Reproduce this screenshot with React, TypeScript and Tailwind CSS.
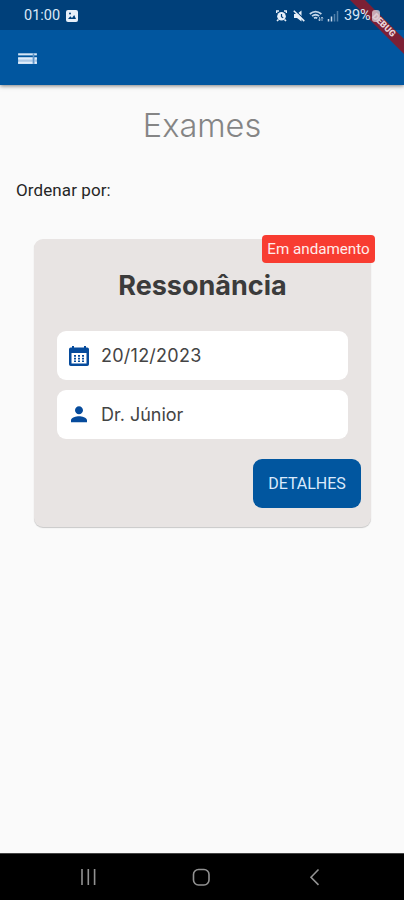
import React from 'react';

function StatusBar() {
  return (
    <div className="relative flex h-[30px] shrink-0 items-center bg-[#00407a] pl-6 text-[#dce8f6]">
      <span className="w-[38px] whitespace-nowrap pt-[3px] font-['Roboto'] text-[14.5px] leading-none">01:00</span>
      <svg className="ml-[4px] mt-px h-[12px] w-[12px]" viewBox="0 0 12 12">
        <rect width="12" height="12" rx="2" fill="#e7eff9" />
        <path d="M2 9 4.3 6.2 6 8 8.2 5 10 9Z" fill="#00407a" />
        <circle cx="4" cy="3.6" r="1" fill="#00407a" />
      </svg>
      <svg className="ml-[198px] mt-px h-[12px] w-[11px]" viewBox="0 0 11 12">
        <circle cx="5.5" cy="6.3" r="4.3" fill="#e7eff9" />
        <path d="M.5 3V1H3M8 1h2.5v2M1 11l1.500-1.500M10 11 8.500 9.500" fill="none" stroke="#e7eff9" strokeWidth="1.600" />
        <path d="M5.500 4v2.700L7.200 7.700" fill="none" stroke="#00407a" strokeWidth="1.200" />
      </svg>
      <svg className="ml-[6px] mt-px h-[12px] w-[12px]" viewBox="0 0 12 12">
        <path d="M1 4h3l4.500-3.500v11L4 8H1Z" fill="#e7eff9" />
        <path d="m1.500 -.2 10.500 10.300" stroke="#00407a" strokeWidth="1.200" />
        <path d="m.8 .8 10.500 10.300" stroke="#e7eff9" strokeWidth="1.500" />
      </svg>
      <svg className="ml-[4px] mt-px h-[12px] w-[15px]" viewBox="0 0 15 12">
        <path d="M.8 4Q6.500-.8 12.400 4M3 6.200q3.600-2.900 7.200 0M5 8.300q1.600-1.200 3.200 0" fill="none" stroke="#c2d5e9" strokeWidth="1.700" />
        <path d="M10.500 7v4M13 7v4M9.500 9.500l1 1.500 1-1.500M12 8.500l1-1.500 1 1.500" fill="none" stroke="#b1c8df" strokeWidth=".8" />
      </svg>
      <svg className="ml-[3px] mt-px h-[12px] w-[12px]" viewBox="0 0 12 12">
        <path d="M1.500 9v2.500M4.500 6.500v5" stroke="#c8d9ec" strokeWidth="1.500" />
        <path d="M7.500 4v7.500M10.500 1v10.500" stroke="#527fa9" strokeWidth="1.500" />
      </svg>
      <svg className="absolute right-0 top-0 h-[55px] w-[55px]" viewBox="0 0 55 55">
        <path d="M1 0h15l39 39v15Z" fill="#7c2035" />
        <text x="35" y="28" transform="rotate(45 35 25)" textAnchor="middle" fill="#ead5dc" fontFamily="Roboto, sans-serif" fontWeight="900" fontSize="9">DEBUG</text>
        <rect x="23" y="10" width="8" height="12" rx="3" fill="#dccbd1" fillOpacity=".8" />
      </svg>
      <span className="relative ml-[5px] whitespace-nowrap pt-[3px] font-['Roboto'] text-[14.5px] leading-none tracking-[-0.1px]">39%</span>
    </div>
  );
}

function Field({ icon, children }: { icon: React.ReactNode; children: React.ReactNode }) {
  return (
    <div className="flex h-[49px] items-center rounded-[9px] bg-white pl-[10px] font-['Inter'] text-[18px] text-[#444]">
      <svg className="mr-[10px] h-6 w-6 shrink-0" viewBox="0 0 24 24" fill="#064b9c">{icon}</svg>
      {children}
    </div>
  );
}

export default function App() {
  return (
    <div className="flex h-[900px] w-[404px] flex-col overflow-hidden bg-[#fafafa]">
      <StatusBar />
      <header className="flex h-[55px] shrink-0 items-center bg-[#01569f] pl-[15px] pt-px shadow-[0_1px_4px_rgba(0,0,0,0.5)]">
        <svg className="h-[25px] w-[25px]" viewBox="0 0 24 24">
          <path d="M3 7h18v2H3z" fill="#d5e6f7" />
          <path d="M3 10.800h18v6.500H3z" fill="#adc9e7" />
          <path d="M3 11h14v2H3zm0 4h14v2H3zm16-4h2v2h-2zm0 4h2v2h-2z" fill="#e0edfb" />
          <path d="M17 7h1.500v10H17z" fill="#5d94c8" />
        </svg>
      </header>
      <main className="flex flex-1 flex-col">
        <h1 className="mt-[21px] text-center font-['Inter'] text-[32.5px] font-light leading-[40px] text-[#858585]">Exames</h1>
        <p className="ml-4 mt-[34px] font-['Roboto'] text-[17px] leading-5 tracking-[0.1px] text-[#262626]">Ordenar por:</p>
        <section className="relative ml-[34px] mt-[39px] h-[288px] w-[337px] rounded-[9px] bg-[#e8e4e3] px-[23px] shadow-[0_1px_1px_rgba(0,0,0,0.2)]">
          <span className="absolute -right-[4px] -top-[4px] flex h-[28px] w-[113px] items-center justify-center whitespace-nowrap rounded-[4px] bg-[#f83c31] pt-px font-['Roboto'] text-[15.2px] text-[#ffeceb]">Em andamento</span>
          <h2 className="pt-[31px] text-center font-['Inter'] text-[27px] font-bold leading-[32px] text-[#3b3b3b]">Ressonância</h2>
          <div className="mt-[29px] flex flex-col gap-[10px]">
            <Field icon={<path fillRule="evenodd" d="M5 3.500V2h2v1.500h10V2h2v1.500h1.200A1.800 1.800 0 0 1 22 5.300v14.900A1.800 1.800 0 0 1 20.200 22H3.800A1.800 1.800 0 0 1 2 20.200V5.300A1.800 1.800 0 0 1 3.800 3.500ZM4.500 9v10.500h15V9ZM7 11h2v1.700H7Zm4 0h2v1.700h-2Zm4 0h2v1.700h-2ZM7 13.700h2v1.700H7Zm4 0h2v1.700h-2Zm4 0h2v1.700h-2ZM7 16.400h2v1.500H7Zm4 0h2v1.500h-2Zm4 0h2v1.500h-2Z" />}><span className="tracking-[0.25px]">20/12/2023</span></Field>
            <Field icon={<path d="M12 12c2.210 0 4-1.790 4-4s-1.790-4-4-4-4 1.790-4 4 1.790 4 4 4zm0 2c-2.670 0-8 1.340-8 4v2h16v-2c0-2.660-5.330-4-8-4z" transform="translate(0 -.8)" />}>Dr. Júnior</Field>
          </div>
          <button className="-mr-[13px] ml-auto mt-[20px] flex h-[49px] w-[108px] items-center justify-center rounded-[9px] bg-[#01569f] font-['Roboto'] text-[16px] text-[#dbeafb]">DETALHES</button>
        </section>
      </main>
      <nav className="h-[47px] shrink-0 border-t border-[#444] bg-black">
        <svg className="h-[46px] w-[404px]" viewBox="0 0 404 46" fill="none" stroke="#929292" strokeWidth="1.600">
          <path d="M82 15v16M88.300 15v16M94.600 15v16M318.500 15.500l-7.500 7.700 7.500 7.700" />
          <rect x="193.500" y="15.500" width="15.500" height="15.500" rx="5" />
        </svg>
      </nav>
    </div>
  );
}
